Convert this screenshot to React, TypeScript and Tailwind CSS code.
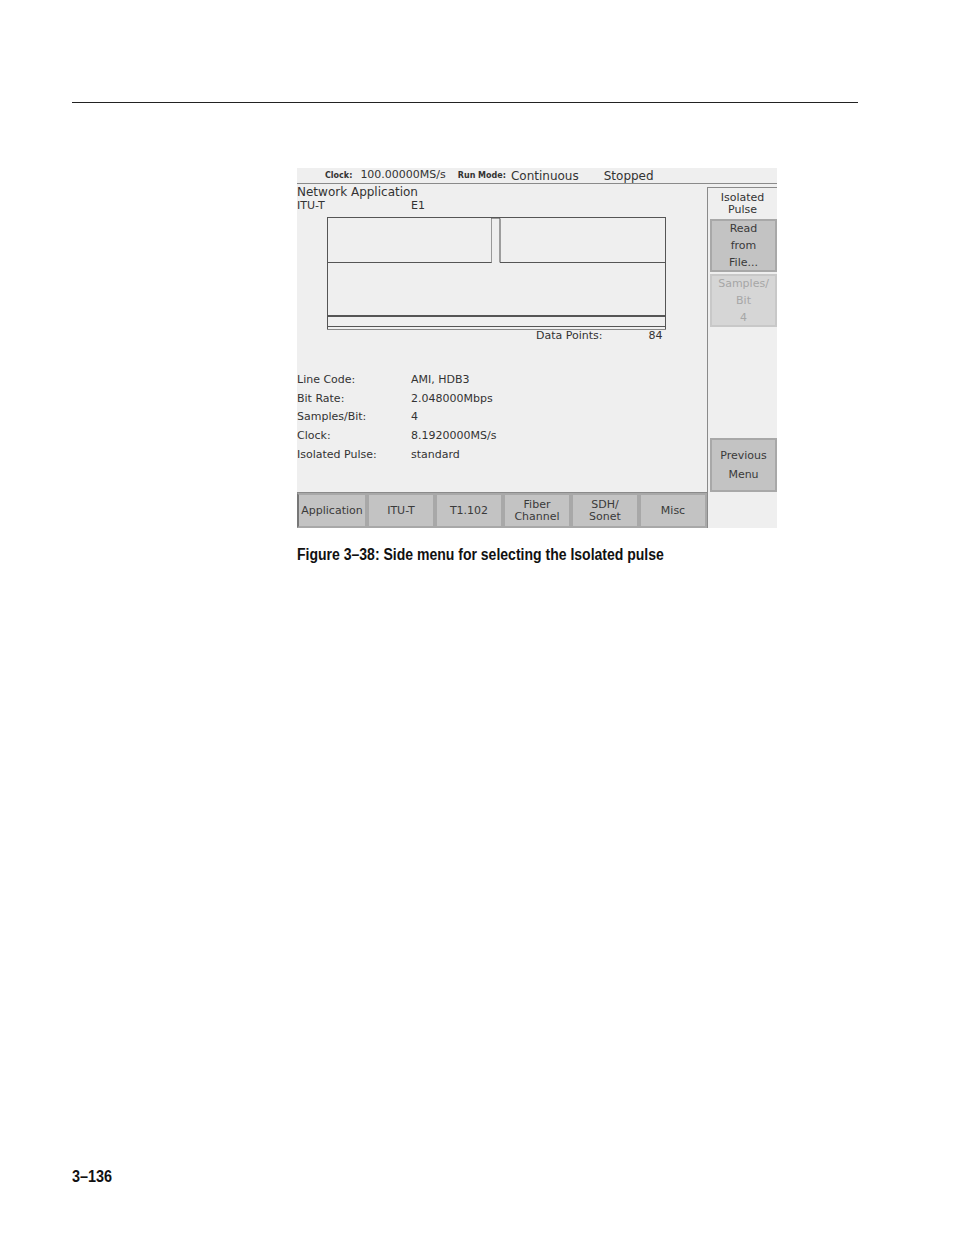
import React from 'react'

const screenFont = { fontFamily: '"DejaVu Sans", "Liberation Sans", sans-serif' }
const printFont = { fontFamily: '"Liberation Sans", Arial, sans-serif' }

const info = [
  ['Line Code:', 'AMI, HDB3'],
  ['Bit Rate:', '2.048000Mbps'],
  ['Samples/Bit:', '4'],
  ['Clock:', '8.1920000MS/s'],
  ['Isolated Pulse:', 'standard'],
]

const tabs = [
  ['Application'],
  ['ITU-T'],
  ['T1.102'],
  ['Fiber', 'Channel'],
  ['SDH/', 'Sonet'],
  ['Misc'],
]

function PulseGraph() {
  return (
    <svg width="340" height="116" viewBox="0 0 340 116" className="block">
      <rect x="0.5" y="0.5" width="338" height="112" fill="none" stroke="#555" strokeWidth="1" />
      <polyline points="0,45.5 164.5,45.5 164.5,1.5 173,1.5 173,45.5 339,45.5" fill="none" stroke="#555" strokeWidth="1" />
      <line x1="164.5" y1="2" x2="164.5" y2="45" stroke="#999" strokeWidth="1" />
      <line x1="173" y1="2" x2="173" y2="45" stroke="#999" strokeWidth="1" />
      <line x1="165" y1="1.5" x2="172.5" y2="1.5" stroke="#999" strokeWidth="1" />
      <line x1="0" y1="99" x2="339" y2="99" stroke="#555" strokeWidth="2" />
      <line x1="0" y1="109.5" x2="339" y2="109.5" stroke="#555" strokeWidth="1" />
      <line x1="0" y1="112.5" x2="339" y2="112.5" stroke="#888" strokeWidth="1" />
    </svg>
  )
}

function SideButton({ lines, disabled }: { lines: string[]; disabled?: boolean }) {
  return (
    <div
      className={`ml-[2px] flex h-[53px] flex-col items-center justify-center border-2 text-[11px] leading-[17px] ${
        disabled ? 'bg-[#d6d6d6] text-[#a6a6a6] border-[#c8c8c8]' : 'bg-[#c3c3c3] text-[#3a3a3a] border-[#a8a8a8]'
      }`}
    >
      {lines.map((l) => (
        <span key={l}>{l}</span>
      ))}
    </div>
  )
}

export default function App() {
  return (
    <div className="relative flex h-[1235px] w-[954px] flex-col bg-white">
      <div className="ml-[72px] mt-[102px] h-[1px] w-[786px] bg-[#222]" />

      <div className="ml-[297px] mt-[65px] flex h-[360px] w-[480px] flex-col bg-[#efefef] text-[#333]" style={screenFont}>
        {/* status bar */}
        <div className="flex h-[16px] items-center border-b border-[#8a8a8a] text-[11px]">
          <span className="ml-[28px] text-[8px] font-bold">Clock:</span>
          <span className="ml-[8px]">100.00000MS/s</span>
          <span className="ml-[12px] text-[8px] font-bold">Run Mode:</span>
          <span className="ml-[5px] text-[12px]">Continuous</span>
          <span className="ml-[25px] text-[12px]">Stopped</span>
        </div>

        <div className="flex flex-1">
          {/* main area */}
          <div className="flex w-[410px] flex-col text-[11px]">
            <div className="mt-[1px] h-[14px] text-[12px] leading-[14px]">Network Application</div>
            <div className="flex h-[16px] leading-[14px]">
              <span className="w-[114px]">ITU-T</span>
              <span>E1</span>
            </div>
            <div className="ml-[30px] mt-[2px]">
              <PulseGraph />
            </div>
            <div className="-mt-[4px] flex h-[14px] leading-[14px]">
              <span className="ml-[239px]">Data Points:</span>
              <span className="ml-[46px]">84</span>
            </div>
            <div className="mt-[28px] flex flex-col">
              {info.map(([k, v]) => (
                <div key={k} className="flex h-[18.7px] items-center">
                  <span className="w-[114px]">{k}</span>
                  <span>{v}</span>
                </div>
              ))}
            </div>
          </div>

          {/* side menu */}
          <div className="mt-[3px] flex w-[70px] flex-col border-l border-t border-[#8a8a8a]">
            <div className="flex h-[31px] flex-col items-center justify-center text-[11px] leading-[12px]">
              <span>Isolated</span>
              <span>Pulse</span>
            </div>
            <SideButton lines={['Read', 'from', 'File...']} />
            <div className="h-[2px]" />
            <SideButton lines={['Samples/', 'Bit', '4']} disabled />
            <div className="flex-1" />
            <div className="ml-[2px] flex h-[54px] flex-col items-center justify-center border-2 border-[#a8a8a8] bg-[#c3c3c3] text-[11px] leading-[19px] text-[#3a3a3a]">
              <span>Previous</span>
              <span>Menu</span>
            </div>
          </div>
        </div>

        {/* bottom tabs */}
        <div className="flex h-[36px]">
          <div className="flex w-[410px] border-t border-[#8a8a8a]">
            {tabs.map((t, i) => (
              <div
                key={t[0]}
                className={`flex h-full flex-col items-center justify-center border-2 border-[#a8a8a8] bg-[#c3c3c3] text-[11px] leading-[12px] text-[#3a3a3a] ${
                  i === 0 ? 'w-[70px] border-l-[#777]' : 'w-[68px]'
                }`}
              >
                {t.map((l) => (
                  <span key={l}>{l}</span>
                ))}
              </div>
            ))}
          </div>
          <div className="w-[70px] border-l border-[#8a8a8a]" />
        </div>
      </div>

      <div
        className="ml-[297px] mt-[17px] origin-left scale-x-[0.876] whitespace-nowrap text-[16px] font-bold leading-[19px] text-[#111]"
        style={printFont}
      >
        Figure 3–38: Side menu for selecting the Isolated pulse
      </div>

      <div
        className="ml-[72px] mt-auto mb-[49px] origin-left scale-x-[0.9] text-[16px] font-bold leading-[19px] text-[#111]"
        style={printFont}
      >
        3–136
      </div>
    </div>
  )
}
